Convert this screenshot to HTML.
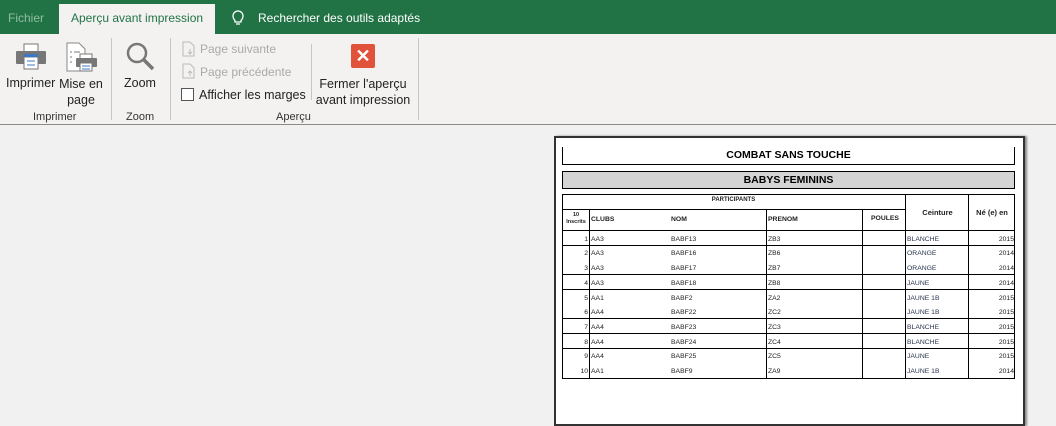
<!DOCTYPE html><html><head><meta charset="utf-8"><style>
*{margin:0;padding:0;box-sizing:border-box}
body{width:1056px;height:410px;overflow:hidden;background:#f1f1f1;font-family:"Liberation Sans",sans-serif;position:relative}
.a{position:absolute;white-space:nowrap}
.top{left:0;top:0;width:1056px;height:34px;background:#217346}
.rib{left:0;top:34px;width:1056px;height:91px;background:#f3f2f1;border-bottom:1px solid #8a8a8a}
.t{font-size:12.5px;color:#222}
.sep{width:1px;background:#c8c6c4}
.td{font-size:6.8px;color:#222;font-family:"Liberation Sans",sans-serif}
.hl{position:absolute;height:1px;background:#000}
.vl{position:absolute;width:1px;background:#000}
</style></head><body>
<div class="a top"></div>
<div class="a" style="left:8px;top:11px;font-size:12px;color:#8fbfa2">Fichier</div>
<div class="a" style="left:59px;top:4px;width:156px;height:31px;background:#f3f2f1"></div>
<div class="a" style="left:71px;top:11px;font-size:12px;color:#217346">Aperçu avant impression</div>
<svg class="a" style="left:231px;top:10px" width="14" height="16" viewBox="0 0 14 16"><path d="M4 10.5C2.5 9 2 7.5 2 6a5 5 0 0 1 10 0c0 1.5-.5 3-2 4.5V12H4z M5 14h4" fill="none" stroke="#fff" stroke-width="1.3"/></svg>
<div class="a" style="left:258px;top:11px;font-size:12px;color:#fff">Rechercher des outils adaptés</div>
<div class="a rib"></div>
<svg class="a" style="left:15px;top:42px" width="32" height="28" viewBox="0 0 32 28"><rect x="9" y="2" width="14" height="8" fill="#fff" stroke="#777"/><rect x="1" y="9" width="30" height="13" rx="1" fill="#777"/><rect x="9" y="15" width="14" height="12" fill="#fff" stroke="#777"/><rect x="9" y="12" width="14" height="3" fill="#3c78c3"/><path d="M12 19h8M12 23h8" stroke="#3c78c3"/></svg>
<svg class="a" style="left:66px;top:42px" width="32" height="30" viewBox="0 0 32 30"><path d="M1 1h12l6 6v22H1z" fill="#fff" stroke="#888"/><path d="M4 10h2M8 10h6M4 15h2M4 20h2" stroke="#777"/><rect x="14" y="12" width="12" height="6" fill="#fff" stroke="#777"/><rect x="10" y="16" width="21" height="9" rx="1" fill="#777"/><rect x="14" y="21" width="12" height="8" fill="#fff" stroke="#777"/><path d="M16 24h8M16 27h8" stroke="#3c78c3"/></svg>
<div class="a t" style="left:6px;top:76px">Imprimer</div>
<div class="a t" style="left:59px;top:76px;width:44px;text-align:center;line-height:16px">Mise en<br>page</div>
<div class="a" style="left:33px;top:111px;font-size:11px;color:#333">Imprimer</div>
<div class="a sep" style="left:111px;top:38px;height:82px"></div>
<svg class="a" style="left:126px;top:42px" width="30" height="30" viewBox="0 0 30 30"><circle cx="11" cy="11" r="9" fill="none" stroke="#777" stroke-width="2.5"/><path d="M18 18l9 9" stroke="#777" stroke-width="3.5"/></svg>
<div class="a t" style="left:124px;top:76px">Zoom</div>
<div class="a" style="left:126px;top:111px;font-size:11px;color:#333">Zoom</div>
<div class="a sep" style="left:170px;top:38px;height:82px"></div>
<svg class="a" style="left:182px;top:41px" width="14" height="16" viewBox="0 0 14 16"><path d="M1 1h7l4 4v10H1z" fill="none" stroke="#bbb"/><path d="M8 8v5M6 11l2 2 2-2" stroke="#bbb" fill="none"/></svg>
<div class="a" style="left:200px;top:42px;font-size:12px;color:#aaa">Page suivante</div>
<svg class="a" style="left:182px;top:63px" width="14" height="16" viewBox="0 0 14 16"><path d="M1 1h7l4 4v10H1z" fill="none" stroke="#bbb"/><path d="M8 13V8M6 10l2-2 2 2" stroke="#bbb" fill="none"/></svg>
<div class="a" style="left:200px;top:65px;font-size:12px;color:#aaa">Page précédente</div>
<div class="a" style="left:181px;top:88px;width:13px;height:13px;border:1px solid #555;background:#fff"></div>
<div class="a t" style="left:199px;top:88px">Afficher les marges</div>
<div class="a sep" style="left:311px;top:44px;height:56px"></div>
<div class="a" style="left:351px;top:44px;width:24px;height:24px;background:#e0533a;border-radius:2px;color:#fff;font-size:18px;font-weight:bold;text-align:center;line-height:24px">✕</div>
<div class="a t" style="left:315px;top:76px;width:96px;text-align:center;line-height:16px">Fermer l'aperçu<br>avant impression</div>
<div class="a" style="left:276px;top:111px;font-size:11px;color:#333">Aperçu</div>
<div class="a sep" style="left:418px;top:38px;height:82px"></div>
<div class="a" style="left:554px;top:136px;width:471px;height:290px;background:#fff;border:2px solid #333;box-shadow:2px 0 2px #888"></div>
<div class="vl" style="left:562px;top:147px;height:18px"></div><div class="vl" style="left:1014px;top:147px;height:18px"></div>
<div class="hl" style="left:562px;top:164px;width:453px"></div>
<div class="a" style="left:562px;top:149px;width:453px;text-align:center;font-size:10.5px;font-weight:bold">COMBAT SANS TOUCHE</div>
<div class="a" style="left:562px;top:171px;width:453px;height:18px;background:#d4d4d4;border:1px solid #000;text-align:center;font-size:10.5px;font-weight:bold;line-height:16px">BABYS FEMININS</div>
<div class="a" style="left:562px;top:194px;width:453px;height:185px;border:1px solid #000"></div>
<div class="hl" style="left:562px;top:209px;width:343px"></div>
<div class="hl" style="left:562px;top:230px;width:453px"></div>
<div class="vl" style="left:589px;top:209px;height:170px"></div>
<div class="vl" style="left:766px;top:209px;height:170px"></div>
<div class="vl" style="left:862px;top:209px;height:170px"></div>
<div class="vl" style="left:905px;top:194px;height:185px"></div>
<div class="vl" style="left:968px;top:194px;height:185px"></div>
<div class="hl" style="left:562px;top:245px;width:453px"></div>
<div class="hl" style="left:562px;top:274px;width:453px"></div>
<div class="hl" style="left:562px;top:289px;width:453px"></div>
<div class="hl" style="left:562px;top:318px;width:453px"></div>
<div class="hl" style="left:562px;top:333px;width:453px"></div>
<div class="hl" style="left:562px;top:348px;width:453px"></div>
<div class="a td" style="left:562px;top:197px;width:343px;text-align:center;font-weight:bold;font-size:6px">PARTICIPANTS</div>
<div class="a td" style="left:563px;top:212px;width:26px;text-align:center;font-weight:bold;font-size:5.5px;line-height:7px">10<br>Inscrits</div>
<div class="a td" style="left:591px;top:216px;font-weight:bold">CLUBS</div>
<div class="a td" style="left:671px;top:216px;font-weight:bold">NOM</div>
<div class="a td" style="left:768px;top:216px;font-weight:bold">PRENOM</div>
<div class="a td" style="left:871px;top:215px;font-weight:bold">POULES</div>
<div class="a td" style="left:907px;top:208px;width:61px;text-align:center;font-weight:bold;font-size:7.5px">Ceinture</div>
<div class="a td" style="left:969px;top:208px;width:46px;text-align:center;font-weight:bold;font-size:7.5px">Né (e) en</div>
<div id="rows"></div>
<script>
var d=[[1,"AA3","BABF13","ZB3","BLANCHE",2015,236],[2,"AA3","BABF16","ZB6","ORANGE",2014,250],[3,"AA3","BABF17","ZB7","ORANGE",2014,265],[4,"AA3","BABF18","ZB8","JAUNE",2014,280],[5,"AA1","BABF2","ZA2","JAUNE 1B",2015,295],[6,"AA4","BABF22","ZC2","JAUNE 1B",2015,309],[7,"AA4","BABF23","ZC3","BLANCHE",2015,324],[8,"AA4","BABF24","ZC4","BLANCHE",2015,339],[9,"AA4","BABF25","ZC5","JAUNE",2015,353],[10,"AA1","BABF9","ZA9","JAUNE 1B",2014,368]];
var h="";d.forEach(function(r){var y=r[6];
h+='<div class="a td" style="left:562px;top:'+y+'px;width:26px;text-align:right">'+r[0]+'</div>';
h+='<div class="a td" style="left:591px;top:'+y+'px">'+r[1]+'</div>';
h+='<div class="a td" style="left:671px;top:'+y+'px">'+r[2]+'</div>';
h+='<div class="a td" style="left:768px;top:'+y+'px">'+r[3]+'</div>';
h+='<div class="a td" style="left:907px;top:'+y+'px;color:#2a3550">'+r[4]+'</div>';
h+='<div class="a td" style="left:969px;top:'+y+'px;width:45px;text-align:right">'+r[5]+'</div>';});
document.getElementById("rows").innerHTML=h;
</script>
</body></html>
